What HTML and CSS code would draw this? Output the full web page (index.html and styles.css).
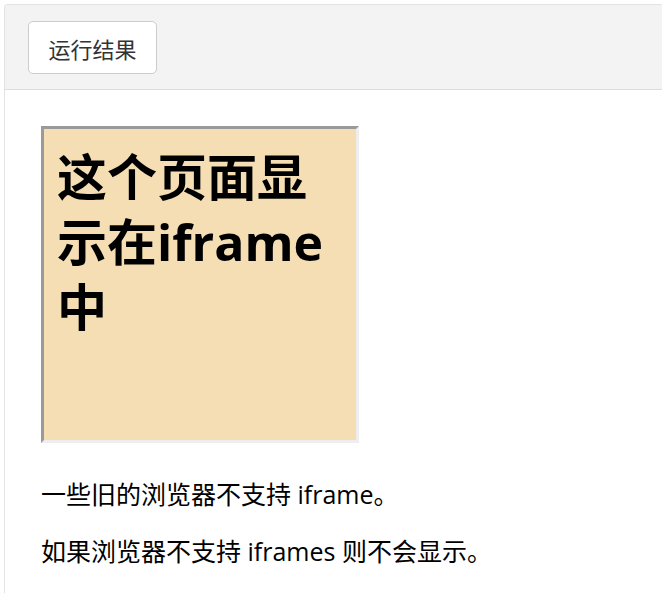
FILE: index.html
```html
<!DOCTYPE html>
<html lang="zh-CN">
<head>
<meta charset="utf-8">
<title>运行结果</title>
<link rel="stylesheet" href="styles.css">
</head>
<body>
<div class="panel">
  <div class="toolbar">
    <button class="btn">运行结果</button>
  </div>
  <div class="content">
    <div class="frame">
      <h1 class="frame-title">这个页面显示在iframe中</h1>
    </div>
    <p class="note">一些旧的浏览器不支持 iframe。</p>
    <p class="note">如果浏览器不支持 iframes 则不会显示。</p>
  </div>
</div>
</body>
</html>
```
FILE: styles.css
```css
html, body {
  margin: 0;
  padding: 0;
  background: #ffffff;
}
body {
  font-family: "Open Sans", "Noto Sans CJK SC", sans-serif;
  color: #000;
}
.panel {
  margin: 4px 0 0 4px;
  border-left: 1px solid #e3e3e3;
  border-top: 1px solid #e3e3e3;
  border-top-left-radius: 4px;
  min-height: 600px;
}
.toolbar {
  background: #f3f3f3;
  height: 85px;
  border-bottom: 1px solid #dcdcdc;
  padding: 16px 0 0 23px;
  box-sizing: border-box;
  border-top-left-radius: 4px;
}
.btn {
  display: block;
  width: 129px;
  height: 53px;
  background: #fff;
  border: 1px solid #cccccc;
  border-radius: 5px;
  font-family: "Noto Sans CJK SC", sans-serif;
  font-size: 22px;
  color: #333;
  padding: 0;
  line-height: 1;
}
.content {
  padding: 36px 0 0 36px;
}
.frame {
  width: 318px;
  height: 317px;
  box-sizing: border-box;
  border: 3px solid;
  border-color: #9a9a9a #eeeeee #eeeeee #9a9a9a;
  background: #f5deb3;
  padding: 16px 8px 0 13px;
}
.frame-title {
  margin: 0;
  font-size: 50px;
  line-height: 65px;
  font-weight: bold;
  font-family: "Open Sans", "Noto Sans CJK SC", sans-serif;
}
.note {
  font-size: 25px;
  line-height: 33px;
  margin: 0;
}
.note:first-of-type {
  margin-top: 35px;
}
.note + .note {
  margin-top: 24px;
}
```
